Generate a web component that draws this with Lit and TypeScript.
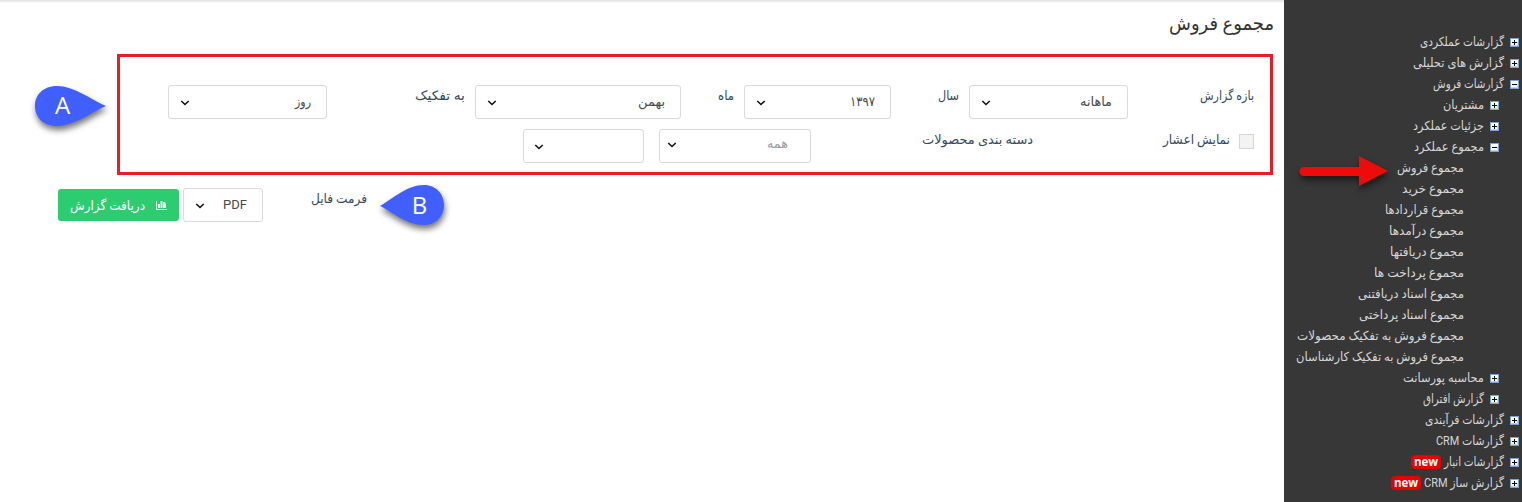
import { LitElement, html, svg, css } from "lit";
import { customElement, property } from "lit/decorators.js";

/** A run of text condensed or widened to a fixed advance width. */
@customElement("fit-text")
class FitText extends LitElement {
  @property() text = "";
  @property({ type: Number }) width = 60;
  @property({ type: Number }) size = 13;
  static styles = css`
    :host { display: block; flex: none; }
    svg { display: block; overflow: visible; }
    text { fill: currentColor; font-family: Roboto, "DejaVu Sans", sans-serif; direction: rtl; }
    .latin { direction: ltr; }
  `;
  render() {
    const latin = /^[\x00-\x7f]*$/.test(this.text);
    return html`<svg width=${this.width} height="20">
      <text class=${latin ? "latin" : ""} x=${latin ? 0 : this.width} y="15" font-size=${this.size}
        textLength=${this.width} lengthAdjust="spacingAndGlyphs">${this.text}</text>
    </svg>`;
  }
}

type Row = [level: number, icon: string, text: string, width: number, isNew?: boolean];
const rows: Row[] = [
  [0, "+", "گزارشات عملکردی", 84],
  [0, "+", "گزارش های تحلیلی", 91],
  [0, "-", "گزارشات فروش", 71],
  [1, "+", "مشتریان", 41],
  [1, "+", "جزئیات عملکرد", 71],
  [1, "-", "مجموع عملکرد", 70],
  [2, "", "مجموع فروش", 67],
  [2, "", "مجموع خرید", 62],
  [2, "", "مجموع قراردادها", 79],
  [2, "", "مجموع درآمدها", 75],
  [2, "", "مجموع دریافتها", 74],
  [2, "", "مجموع پرداخت ها", 90],
  [2, "", "مجموع اسناد دریافتنی", 106],
  [2, "", "مجموع اسناد پرداختی", 105],
  [2, "", "مجموع فروش به تفکیک محصولات", 167],
  [2, "", "مجموع فروش به تفکیک کارشناسان", 168],
  [1, "+", "محاسبه پورسانت", 81],
  [1, "+", "گزارش افتراق", 61],
  [0, "+", "گزارشات فرآیندی", 79],
  [0, "+", "گزارشات CRM", 68],
  [0, "+", "گزارشات انبار", 60, true],
  [0, "+", "گزارش ساز CRM", 80, true],
];

@customElement("report-tree")
class ReportTree extends LitElement {
  static styles = css`
    :host { display: block; direction: rtl; background: #373737; color: #d6d6d6; padding-top: 30px; height: 472px; }
    .row { display: flex; height: 21px; align-items: center; padding-right: 3px; }
    .l1 { padding-right: 23px; }
    .l2 { padding-right: 58px; }
    .toggle { width: 9px; height: 9px; margin-left: 6px; margin-top: 3px; flex: none; }
    .toggle svg { display: block; }
    .new { margin: 2px 3px 0 0; width: 30px; height: 14px; border-radius: 4px; background: #e60000; color: #fff;
      font: 700 11.5px/13px "Open Sans", sans-serif; text-align: center; }
  `;
  render() {
    return rows.map(([level, icon, text, width, isNew]) => html`
      <div class="row l${level}">
        ${icon ? html`<span class="toggle"><svg width="9" height="9" shape-rendering="crispEdges">
          <rect width="9" height="9" fill="#78a5d8"/><rect x="1" y="1" width="7" height="7" fill="#fff"/>
          <path d="M1 7h7v1h-7zM7 4h1v3h-1z" fill="#d8d4c8"/>
          <path d=${icon === "+" ? "M2 4h5v1h-5zM4 2h1v5h-1z" : "M2 4h5v1h-5z"} fill="#000"/></svg></span>` : ""}
        <fit-text .text=${text} .width=${width} .size=${12.5}></fit-text>
        ${isNew ? html`<span class="new">new</span>` : ""}
      </div>`);
  }
}

@customElement("select-box")
class SelectBox extends LitElement {
  @property() text = "";
  @property({ type: Number }) width = 0;
  static styles = css`
    :host { display: flex; box-sizing: border-box; direction: rtl; height: 34px; border: 1px solid #d9d9d9;
      border-radius: 3px; background: #fff; color: #4a4a4a; justify-content: space-between;
      padding: 5px 15px 0 11px; flex: none; }
    .chev { display: block; margin: 9px 0 0; }
  `;
  render() {
    return html`${this.text ? html`<fit-text .text=${this.text} .width=${this.width}></fit-text>` : html`<span></span>`}
      <svg class="chev" width="10" height="7"><path d="M1.3 1L5 4.500L8.700 1" fill="none" stroke="#111" stroke-width="1.6"/></svg>`;
  }
}

@customElement("app-root")
class AppRoot extends LitElement {
  static styles = css`
    :host { display: grid; grid-template-columns: 1284px 238px; height: 502px; position: relative; background: #fff; overflow: hidden; }
    main { direction: rtl; border-top: 1px solid #e6e6e6; box-shadow: inset 0 2px 2px -1px #e6e6e6; color: #34495e; }
    .title { padding: 14px 10px 0 0; height: 53px; box-sizing: border-box; color: #333; }
    .panel { box-sizing: border-box; width: 1156px; height: 121px; margin-right: 11px; border: 3px solid #ed1c24; padding: 28px 16px 0 0; }
    .line { display: flex; height: 44px; }
    .period { width: 159px; margin-right: 72px; }
    .year { width: 147px; margin-right: 47px; }
    .month { width: 206px; margin-right: 37px; }
    .split { width: 159px; margin-right: 88px; }
    .next { margin-right: 10px; }
    .check { width: 13px; height: 13px; border: 1px solid #d6d6d6; background: #f5f2f2; margin: 5px 0 0 9px; }
    .cat { margin-right: 130px; }
    .all { width: 152px; margin-right: 111px; color: #999fa8; padding: 3px 22px 0 7px; }
    .blank { width: 121px; margin-right: 15px; padding-left: 10px; }
    .bottom { display: flex; padding: 13px 917px 0 0; }
    .format { width: 80px; margin-right: 48px; }
    .download { box-sizing: border-box; display: flex; gap: 11px; width: 121px; height: 32px; margin: 1px 4px 0 0;
      padding: 6px 12px 0 0; border-radius: 3px; background: #2ecc71; color: #fff; }
    .download svg { margin-top: 6px; }
    .marks { position: absolute; left: 0; top: 0; pointer-events: none; filter: drop-shadow(1px 4px 3px rgba(0,0,0,.55)); }
    .letters { position: absolute; left: 0; top: 0; pointer-events: none; }
    .letters text { font: 400 24px "Open Sans", sans-serif; fill: #fff; text-anchor: middle; }
  `;
  render() {
    return html`
      <main>
        <div class="title"><fit-text text="مجموع فروش" .width=${105} .size=${19}></fit-text></div>
        <section class="panel">
          <div class="line">
            <fit-text text="بازه گزارش" .width=${54}></fit-text>
            <select-box class="period" text="ماهانه" .width=${32}></select-box>
            <fit-text class="next" text="سال" .width=${21}></fit-text>
            <select-box class="year" text="۱۳۹۷" .width=${25}></select-box>
            <fit-text class="next" text="ماه" .width=${16}></fit-text>
            <select-box class="month" text="بهمن" .width=${27}></select-box>
            <fit-text class="next" text="به تفکیک" .width=${50}></fit-text>
            <select-box class="split" text="روز" .width=${16}></select-box>
          </div>
          <div class="line">
            <span class="check"></span>
            <fit-text text="نمایش اعشار" .width=${67}></fit-text>
            <fit-text class="cat" text="دسته بندی محصولات" .width=${111}></fit-text>
            <select-box class="all" text="همه" .width=${21}></select-box>
            <select-box class="blank"></select-box>
          </div>
        </section>
        <div class="bottom">
          <fit-text text="فرمت فایل" .width=${56}></fit-text>
          <select-box class="format" text="PDF" .width=${24}></select-box>
          <div class="download">
            <svg width="11" height="9"><path d="M0 0h1v8h10v1H0zM2 3h2v4H2zM4.500 0h2v7h-2zM7 1h2l1 2v4H7z" fill="#fff" fill-opacity=".9"/></svg>
            <fit-text text="دریافت گزارش" .width=${75}></fit-text>
          </div>
        </div>
      </main>
      <report-tree></report-tree>
      <svg class="marks" width="1522" height="502">
        ${svg`<path d="M106 106C90 99 74 86 57 86C43 86 35 95 35 106C35 117 43 126 57 126C74 126 90 113 106 106Z" fill="#415fff"/>
        <path d="M380 206C394 198 407 185 424 185C436 185 444 194 444 205C444 216 436 225 424 225C407 225 394 213 380 206Z" fill="#415fff"/>
        <path d="M1304 167H1359V156L1388 171L1359 186V176H1304A4.5 4.5 0 0 1 1304 167Z" fill="#ee0b0b"/>`}
      </svg>
      <svg class="letters" width="1522" height="502"><text x="62.500" y="114">A</text><text x="419.500" y="214">B</text></svg>`;
  }
}
